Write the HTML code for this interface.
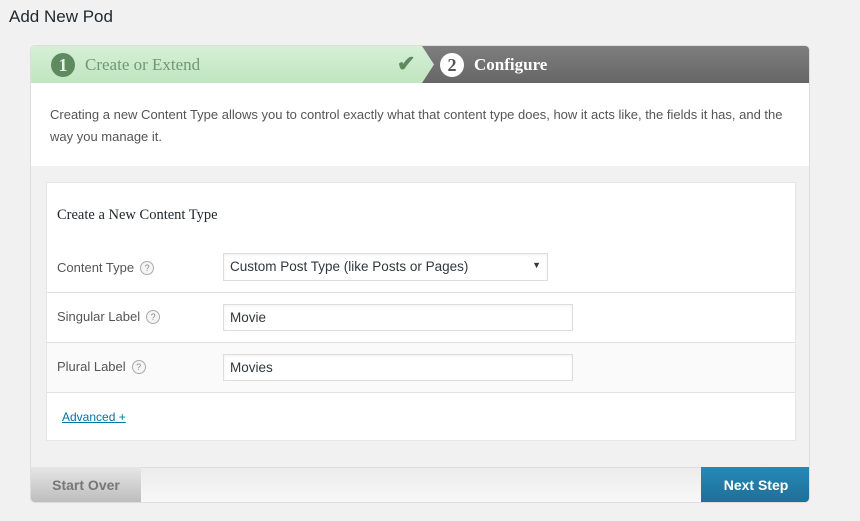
<!DOCTYPE html>
<html><head><style>
*{box-sizing:border-box;margin:0;padding:0}
body{width:860px;height:521px;background:#f1f1f1;font-family:"Liberation Sans",sans-serif;position:relative;overflow:hidden;color:#444}
.abs{position:absolute}
h1{position:absolute;left:9px;top:7px;font-size:17px;font-weight:normal;color:#23282d}
.wrap{left:30px;top:45px;width:780px;height:458px;border:1px solid #ddd;border-radius:5px;background:#f1f1f1;overflow:hidden}
.s1{left:0;top:0;width:390px;height:37px;background:linear-gradient(#d6f0d6,#c0e5c0)}
.s2{left:390px;top:0;width:390px;height:37px;background:linear-gradient(#7e7e7e,#666)}
.num{width:24px;height:24px;border-radius:50%;font-family:"Liberation Serif",serif;font-size:18px;font-weight:bold;text-align:center;line-height:24px}
.st{font-family:"Liberation Serif",serif;font-size:17px}
.intro{left:0;top:37px;width:780px;height:83px;background:#fff;font-size:13px;line-height:22px;color:#555;padding:21px 19px}
.box{left:15px;top:136px;width:750px;height:259px;background:#fff;border:1px solid #e5e5e5}
.row{position:absolute;left:0;width:748px;border-top:1px solid #e1e1e1}
.lbl{position:absolute;left:10px;font-size:13px;color:#555}
.q{display:inline-block;width:14px;height:14px;border:1px solid #aaa;border-radius:50%;font-size:9px;text-align:center;line-height:12px;color:#888;margin-left:6px;vertical-align:1px;background:#f5f5f5}
.inp{position:absolute;left:176px;width:350px;height:27px;border:1px solid #ddd;font-size:13.5px;padding:5px 6px;color:#32373c;box-shadow:inset 0 1px 2px rgba(0,0,0,.07)}
</style></head><body>
<h1>Add New Pod</h1>
<div class="abs wrap">
 <div class="abs s2"></div>
 <div class="abs s1"></div>
 <svg class="abs" style="left:389px;top:0" width="16" height="37"><defs><linearGradient id="g" x1="0" y1="0" x2="0" y2="1"><stop offset="0" stop-color="#d6f0d6"/><stop offset="1" stop-color="#c0e5c0"/></linearGradient></defs><polygon points="0,0 2,0 14,18.5 2,37 0,37" fill="url(#g)"/></svg>
 <div class="abs num" style="left:20px;top:7px;background:#5e8a60;color:#e5f5e5">1</div>
 <div class="abs st" style="left:54px;top:9px;color:#6f9a70">Create or Extend</div>
 <div class="abs" style="left:366px;top:5px;font-size:22px;font-weight:bold;color:#5e8a60">✔</div>
 <div class="abs num" style="left:409px;top:7px;background:#fff;color:#555">2</div>
 <div class="abs st" style="left:443px;top:9px;color:#fff;font-weight:bold">Configure</div>
 <div class="abs intro">Creating a new Content Type allows you to control exactly what that content type does, how it acts like, the fields it has, and the way you manage it.</div>
 <div class="abs box">
  <div class="abs" style="left:10px;top:24px;font-family:'Liberation Serif',serif;font-size:14.5px;color:#23282d">Create a New Content Type</div>
  <div class="lbl" style="top:77px">Content Type<span class="q">?</span></div>
  <div class="inp" style="top:70px;width:325px;height:28px;background:#fff;color:#32373c">Custom Post Type (like Posts or Pages)<span style="position:absolute;right:6px;top:6px;font-size:9px">▼</span></div>
  <div class="row" style="top:109px;height:50px"><div class="lbl" style="top:16px">Singular Label<span class="q">?</span></div><div class="inp" style="top:11px">Movie</div></div>
  <div class="row" style="top:159px;height:50px;background:#fafafa"><div class="lbl" style="top:16px">Plural Label<span class="q">?</span></div><div class="inp" style="top:11px;background:#fff">Movies</div></div>
  <div class="row" style="top:209px;height:49px"><div class="lbl" style="top:17px;left:15px;font-size:12px;color:#0073aa;text-decoration:underline">Advanced +</div></div>
 </div>
 <div class="abs" style="left:0;top:421px;width:780px;height:36px;border-top:1px solid #ddd;background:linear-gradient(#ececec,#f8f8f8)"></div>
 <div class="abs" style="left:0;top:421px;width:110px;height:36px;background:linear-gradient(#e6e6e6,#bcbcbc);font-weight:bold;font-size:14px;color:#777;text-align:center;line-height:36px">Start Over</div>
 <div class="abs" style="left:670px;top:421px;width:110px;height:36px;background:linear-gradient(#2589b8,#1e6f96);font-weight:bold;font-size:14px;color:#fff;text-align:center;line-height:36px">Next Step</div>
</div>
</body></html>
